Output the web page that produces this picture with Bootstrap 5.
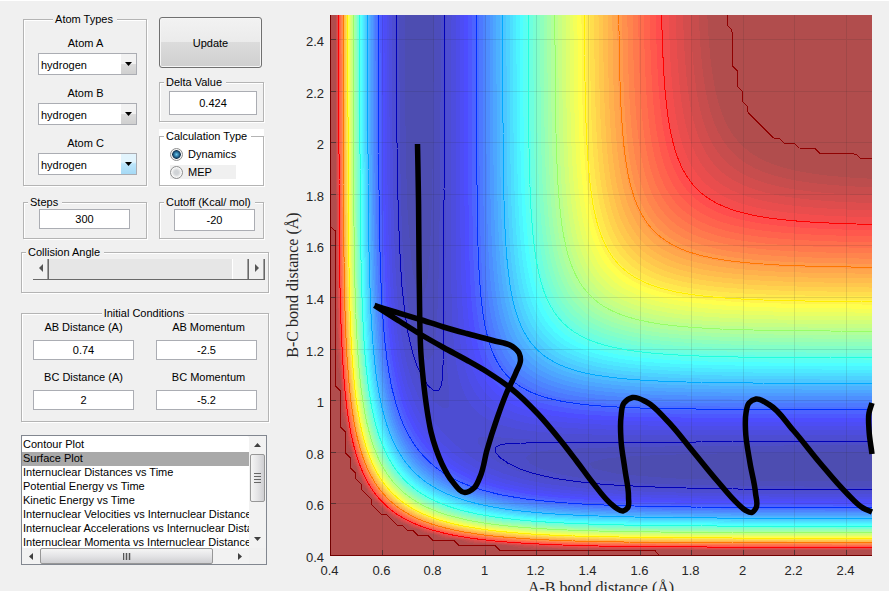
<!DOCTYPE html>
<html lang="en">
<head>
<meta charset="utf-8">
<meta name="viewport" content="width=device-width, initial-scale=1">
<title>Triatomic reaction dynamics</title>
<link href="https://cdn.jsdelivr.net/npm/bootstrap@5.3.0/dist/css/bootstrap.min.css" rel="stylesheet">
<style>
  body { background: #f0f0f0; color: #000; border-top: 1px solid #fff;
         font: 11px/14px "Liberation Sans", Arial, sans-serif; }
  .controls { flex: 0 0 269px; padding: 11px 0 0 21px; }
  .col-a { flex: 0 0 123px; margin-left: 2px; }
  .col-b { flex: 0 0 105px; margin-left: 12px; padding-top: 5px; }
  .frame { border: 1px solid #b4b4b4; box-shadow: 1px 1px 0 #fff, inset 1px 1px 0 #fff; padding: 0; margin: 0; min-width: 0; }
  .frame > legend { float: none; width: auto; margin: 0 0 0 4px; padding: 0 4px 0 2px; background: #f0f0f0;
                    font-size: 11px; line-height: 14px; }
  .frame > legend.centered { margin: 0 auto; }
  .field { font-size: 11px; line-height: 14px; text-align: center; color: #000; background: #fff;
           border: 1px solid #abadb3; border-radius: 0; padding: 0; display: block; width: 100%; height: 20px; }
  .field-md { height: 22px; }
  .field-lg { height: 24px; }
  .steps { padding: 0 16px 9px 15px; }
  .delta { padding: 2px 6px 6px 9px; }
  .cutoff { padding: 0 8px 7px 14px; }
  .atoms { padding: 10px 9px 0 14px; height: 159px; }
  .atoms label { display: block; text-align: center; margin-bottom: 3px; padding-right: 4px; }
  .pick { appearance: none; display: block; width: 99px; height: 22px; margin-bottom: 11px; padding: 1px 18px 0 2px;
          font-size: 11px; color: #000; border: 1px solid #abadb3; border-radius: 0;
          background:
            url("data:image/svg+xml,%3Csvg xmlns='http://www.w3.org/2000/svg' width='7' height='4'%3E%3Cpath d='M0 0h7L3.500 4z'/%3E%3C/svg%3E") right 4px center / 7px 4px no-repeat,
            linear-gradient(#f2f2f2 50%, #dcdcdc 50%, #cfcfcf) right center / 15px 100% no-repeat, #fff; }
  .pick-hot { background:
            url("data:image/svg+xml,%3Csvg xmlns='http://www.w3.org/2000/svg' width='7' height='4'%3E%3Cpath d='M0 0h7L3.500 4z'/%3E%3C/svg%3E") right 4px center / 7px 4px no-repeat,
            linear-gradient(#e2f4fd 40%, #bce5fb 50%, #a5d9f5) right center / 15px 100% no-repeat, #fff; }
  .update { height: 51px; width: 103px; font-size: 11px; color: #000; border: 1px solid #707070; border-radius: 3px;
            background: linear-gradient(#f2f2f2, #ebebeb 48%, #dcdcdc 49%, #cfcfcf); box-shadow: inset 0 0 0 1px #f5f5f5; }
  .gap-s { margin-top: 7px; }
  .gap-m { margin-top: 9px; }
  .calc { background: #fff; }
  .calc legend { background: #fff; }
  .calc .choices { padding: 2px 0 4px 10px; }
  .choice { height: 18px; }
  .choice label { padding-left: 5px; }
  .choice input { appearance: none; width: 13px; height: 13px; margin: 0; border: 1px solid #8e8f8f; border-radius: 50%;
                  background: radial-gradient(circle, #d0d3d6 2px, #f4f4f4 5px); box-shadow: inset 0 0 0 1px #f8f8f8; }
  .choice input:checked { background: radial-gradient(circle at 50% 50%, #68c8ee 0, #1c5a85 3px, #12304a 4px, #e6e6e6 5px); }
  .choice-dim > span { background: #f0f0f0; height: 14px; width: 66px; display: flex; align-items: center; }
  .collision { margin-top: 6px; }
  .slider { height: 21px; margin: 0 3px 12px 11px; border-bottom: 1px solid #696969; }
  .arrow { width: 16px; padding: 0 0 3px; border: 0; border-right: 1px solid #696969; background: #f0f0f0;
           box-shadow: inset -1px 0 0 #a0a0a0; display: flex; align-items: center; justify-content: center; }
  .slider input { appearance: none; flex: 1 1 0; min-width: 0; margin: 0; height: 20px; background: #e6e6e6; }
  .slider input::-webkit-slider-thumb { appearance: none; width: 17px; height: 20px; background: #f0f0f0;
           border-left: 1px solid #fff; border-right: 1px solid #696969; box-shadow: inset -1px 0 0 #a0a0a0; }
  .conditions { margin-top: 13px; }
  .initial { padding: 0 11px 11px 11px; display: grid; grid-template-columns: 1fr 1fr; column-gap: 22px; row-gap: 10px; }
  .initial label { display: block; text-align: center; margin-bottom: 6px; }
  .initial .second label { padding-left: 4px; }
  .plots { margin-top: 13px; width: 246px; height: 130px; border: 1px solid #828790; background: #f0f0f0;
           display: grid; grid-template: 112px 16px / 1fr 17px; }
  .plots select { appearance: none; border: 0; padding: 2px 0 0; margin: 0; width: 100%; height: 112px; overflow: hidden;
                  background: #fff; color: #000; font-size: 11px; outline: 0; }
  .plots option { padding: 0 0 0 1px; height: 14px; min-height: 14px; line-height: 15px; color: #000; }
  .plots option:checked { background: #a9a9a9 linear-gradient(#a9a9a9, #a9a9a9); color: #000; }
  .bar-btn { border: 0; padding: 0; background: none; display: flex; align-items: center; justify-content: center; flex: 0 0 18px; }
  .vbar, .hbar { background: #f2f2f2; display: flex; }
  .vbar { flex-direction: column; }
  .grip { border: 1px solid #979797; border-radius: 2px; display: flex; align-items: center; justify-content: center; }
  .vbar .grip { flex: 0 0 48px; margin: 0 1px; background: linear-gradient(90deg, #f5f5f5, #e4e4e6 50%, #cfcfd2); }
  .hbar .grip { flex: 0 0 173px; background: linear-gradient(#f5f5f5, #e4e4e6 50%, #cfcfd2); }
  .plot-area { flex: 1 1 0; min-width: 0; margin-top: -1px; }
  .plot-area svg { display: block; width: 100%; height: auto; }
  .tick { font: 13px "Liberation Sans", Arial, sans-serif; fill: #262626; }
  .axis-title { font: 16px "Liberation Serif", serif; fill: #262626; text-anchor: middle; }
</style>
<script src="https://cdn.jsdelivr.net/npm/bootstrap@5.3.0/dist/js/bootstrap.bundle.min.js"></script>
</head>
<body>
<main class="d-flex align-items-start">
  <form class="controls">
    <div class="d-flex">
      <div class="col-a">
        <fieldset class="frame">
          <legend class="centered">Atom Types</legend>
          <div class="atoms">
            <label for="atomA">Atom A</label>
            <select class="pick" id="atomA"><option>hydrogen</option></select>
            <label for="atomB">Atom B</label>
            <select class="pick" id="atomB"><option>hydrogen</option></select>
            <label for="atomC">Atom C</label>
            <select class="pick pick-hot" id="atomC"><option>hydrogen</option></select>
          </div>
        </fieldset>
        <fieldset class="frame gap-m">
          <legend>Steps</legend>
          <div class="steps"><input class="field" aria-label="Steps" value="300"></div>
        </fieldset>
      </div>
      <div class="col-b">
        <button class="update" type="button">Update</button>
        <fieldset class="frame gap-s">
          <legend>Delta Value</legend>
          <div class="delta"><input class="field field-lg" aria-label="Delta Value" value="0.424"></div>
        </fieldset>
        <div class="calc gap-s">
          <fieldset class="frame">
            <legend>Calculation Type</legend>
            <div class="choices">
              <div class="choice d-flex align-items-center"><input type="radio" name="calc" id="dyn" checked><label for="dyn">Dynamics</label></div>
              <div class="choice choice-dim d-flex align-items-center"><span><input type="radio" name="calc" id="mep"><label for="mep">MEP</label></span></div>
            </div>
          </fieldset>
        </div>
        <fieldset class="frame gap-m">
          <legend>Cutoff (Kcal/ mol)</legend>
          <div class="cutoff"><input class="field field-md" aria-label="Cutoff" value="-20"></div>
        </fieldset>
      </div>
    </div>
    <fieldset class="frame collision">
      <legend>Collision Angle</legend>
      <div class="slider d-flex">
        <button class="arrow" type="button" aria-label="Decrease angle"><svg width="4" height="8"><path d="M4 0v8L0 4z" fill="#555"/></svg></button>
        <input type="range" aria-label="Collision Angle" min="0" max="180" value="180">
        <button class="arrow" type="button" aria-label="Increase angle"><svg width="4" height="8"><path d="M0 0v8l4-4z" fill="#555"/></svg></button>
      </div>
    </fieldset>
    <fieldset class="frame conditions">
      <legend class="centered">Initial Conditions</legend>
      <div class="initial">
        <div><label for="abd">AB Distance (A)</label><input class="field" id="abd" value="0.74"></div>
        <div class="second"><label for="abm">AB Momentum</label><input class="field" id="abm" value="-2.5"></div>
        <div><label for="bcd">BC Distance (A)</label><input class="field" id="bcd" value="2"></div>
        <div class="second"><label for="bcm">BC Momentum</label><input class="field" id="bcm" value="-5.2"></div>
      </div>
    </fieldset>
    <div class="plots">
      <select size="8" aria-label="Plot type">
        <option>Contour Plot</option>
        <option selected>Surface Plot</option>
        <option>Internuclear Distances vs Time</option>
        <option>Potential Energy vs Time</option>
        <option>Kinetic Energy vs Time</option>
        <option>Internuclear Velocities vs Internuclear Distance</option>
        <option>Internuclear Accelerations vs Internuclear Distance</option>
        <option>Internuclear Momenta vs Internuclear Distance</option>
      </select>
      <div class="vbar">
        <button class="bar-btn" type="button" aria-label="Scroll up"><svg width="7" height="4"><path d="M0 4h7L3.500 0z" fill="#404040"/></svg></button>
        <span class="grip"><svg width="7" height="10"><path d="M0 .5h7M0 3.500h7M0 6.500h7M0 9.500h7" stroke="#666"/></svg></span>
        <button class="bar-btn mt-auto" type="button" aria-label="Scroll down"><svg width="7" height="4"><path d="M0 0h7L3.500 4z" fill="#404040"/></svg></button>
      </div>
      <div class="hbar">
        <button class="bar-btn" type="button" aria-label="Scroll left"><svg width="4" height="7"><path d="M4 0v7L0 3.500z" fill="#404040"/></svg></button>
        <span class="grip"><svg width="8" height="7"><path d="M.5 0v7M3.500 0v7M6.500 0v7" stroke="#555" stroke-width="1.500"/></svg></span>
        <button class="bar-btn ms-auto" type="button" aria-label="Scroll right"><svg width="4" height="7"><path d="M0 0v7l4-3.500z" fill="#404040"/></svg></button>
      </div>
    </div>
  </form>

  <div class="plot-area">
    <svg id="plot" viewBox="269 0 620 591" role="img" aria-label="Potential energy surface with trajectory">
      <clipPath id="axes"><path d="M330 15H872V556H330z"/></clipPath>
      <g id="field" shape-rendering="crispEdges"></g>
      <g id="gridlines" stroke="#262626" stroke-opacity=".12" shape-rendering="crispEdges"></g>
      <g id="contours" fill="none" shape-rendering="crispEdges" clip-path="url(#axes)"></g>
      <g id="ticks"></g>
      <path id="path" fill="none" stroke="#000" stroke-width="5.500" stroke-linejoin="round"/>
      <text class="axis-title" x="601" y="593">A-B bond distance (Å)</text>
      <text class="axis-title" transform="translate(298 285) rotate(-90)">B-C bond distance (Å)</text>
    </svg>
  </div>
</main>
<script>
// London-Eyring-Polanyi-Sato surface for collinear H + H2, energies in kcal/mol.
const D = 109.4, BETA = 1.986, RE = 0.742, K = 0.185, CUTOFF = -20;
function pair(r) {
  const e = Math.exp(-BETA * (r - RE));
  const s = (1 + K) * D * (e * e - 2 * e), t = (1 - K) * D / 2 * (e * e + 2 * e);
  return [(s + t) / 2, (s - t) / 2];
}
function energy(ab, bc) {
  const [q1, j1] = pair(ab), [q2, j2] = pair(bc), [q3, j3] = pair(ab + bc);
  const root = Math.sqrt(((j1 - j2) ** 2 + (j2 - j3) ** 2 + (j3 - j1) ** 2) / 2);
  return Math.min(CUTOFF, (q1 + q2 + q3 - root) / (1 + K));
}
const R0 = 0.4, STEP = 0.02, N = 106, LEFT = 330, BOTTOM = 556, TOP = 15, RIGHT = 872, S = 258;
const px = r => LEFT + (r - R0) * S, py = r => BOTTOM - (r - R0) * S;
const grid = [];
let vmin = 0;
for (let j = 0; j < N; j++) {
  grid.push([]);
  for (let i = 0; i < N; i++) { const v = energy(R0 + i * STEP, R0 + j * STEP); grid[j].push(v); vmin = Math.min(vmin, v); }
}
function jet(t, alpha) {
  t = Math.min(t, .984);
  const c = k => { const v = Math.max(0, Math.min(1, 1.5 - Math.abs(4 * t - k)));
                   return Math.round(255 * (v * alpha + 1 - alpha)); };
  return `rgb(${c(3)},${c(2)},${c(1)})`;
}
const el = (parent, name, attrs, text) => {
  const n = document.createElementNS('http://www.w3.org/2000/svg', name);
  for (const k in attrs) n.setAttribute(k, attrs[k]);
  if (text) n.textContent = text;
  document.getElementById(parent).appendChild(n);
};
// Colour bands, one path per colour made of horizontal runs.
const bands = Array.from({ length: 64 }, () => []);
function bandAt(x, y) {
  const fx = (x - LEFT) / S / STEP, fy = (BOTTOM - y) / S / STEP, i = Math.floor(fx), j = Math.floor(fy), a = fx - i, b = fy - j;
  const v = (grid[j][i] * (1 - a) + grid[j][i + 1] * a) * (1 - b) + (grid[j + 1][i] * (1 - a) + grid[j + 1][i + 1] * a) * b;
  return Math.min(63, Math.floor((v - vmin) / (CUTOFF - vmin) * 64));
}
for (let y = TOP; y < BOTTOM; y++) {
  let start = LEFT, cur = bandAt(LEFT + .5, y + .5);
  for (let x = LEFT + 1; x <= RIGHT; x++) {
    const c = x < RIGHT ? bandAt(x + .5, y + .5) : -1;
    if (c !== cur) { bands[cur].push(`M${start} ${y}H${x}v1H${start}z`); start = x; cur = c; }
  }
}
bands.forEach((b, k) => el('field', 'path', { d: b.join(''), fill: jet((k + 1) / 64, .7) }));
// Contour lines by marching squares.
for (let n = 0; n < 9; n++) {
  const level = n === 8 ? CUTOFF - .001 : -105.6 + n * 10.62;
  let d = '';
  for (let j = 0; j < N - 1; j++) for (let i = 0; i < N - 1; i++) {
    const p = [[i, j], [i + 1, j], [i + 1, j + 1], [i, j + 1]], hits = [];
    for (let k = 0; k < 4; k++) {
      const [ax, ay] = p[k], [bx, by] = p[(k + 1) % 4], va = grid[ay][ax] - level, vb = grid[by][bx] - level;
      if (va < 0 !== vb < 0) {
        const t = va / (va - vb);
        hits.push([px(R0 + (ax + (bx - ax) * t) * STEP), py(R0 + (ay + (by - ay) * t) * STEP)].map(q => q.toFixed(1)).join(' '));
      }
    }
    for (let k = 0; k + 1 < hits.length; k += 2) d += `M${hits[k]}L${hits[k + 1]}`;
  }
  el('contours', 'path', { d, stroke: jet((level - vmin) / (CUTOFF - vmin) * .985 + .015, 1) });
}
// Grid, ticks and tick labels.
el('ticks', 'path', { d: `M330.500 15V555.500H872`, stroke: '#700000', fill: 'none', 'shape-rendering': 'crispEdges' });
for (let n = 0; n <= 10; n++) {
  const r = .4 + n * .2, x = Math.round(px(r)) + .5, y = Math.round(py(r)) - .5, label = String(+r.toFixed(1));
  if (n) {
    el('gridlines', 'path', { d: `M${x} 15V556M330 ${y}H872` });
    el('ticks', 'path', { d: `M${x} 555v-5M331 ${y}h5`, stroke: '#262626', 'stroke-opacity': .6, 'shape-rendering': 'crispEdges' });
  }
  el('ticks', 'text', { class: 'tick', x: x - 1, y: 575, 'text-anchor': 'middle' }, label);
  el('ticks', 'text', { class: 'tick', x: 324, y: y + 6, 'text-anchor': 'end' }, label);
}
// Trajectory, smoothed through its sample points.
const runs = [
  [[417.5,144],[418,170],[418.5,200],[419,260],[419.5,300],[420,330],[421,355],[422.5,372],[425,395],[428,416],[431,432],[436,449],[442,464],[452,481],[465,492.5],[474,488],[480,477],[487,450],[497,418.5],[506.5,393],[516,372.5],[520.5,360],[519,353],[512.5,346.5],[493,340.5],[466.5,333.5],[443.5,327],[420,319.5],[397,312.5],[374.5,305.5]],
  [[374.5,305.5],[400,321.5],[420,334],[443.5,347.5],[466.5,360],[488,372.5],[511,388.5],[538,414],[561,441],[576.5,461],[593,483],[610,503],[616,508],[623,511],[627.5,508],[628.5,497],[625,470],[621,440],[621,417],[624,403],[632.5,397.5],[646.5,402],[666.5,420],[693,451.5],[716.5,480],[738,504],[745,510],[752,512.500],[756,508],[755.5,493],[750,463],[745.5,430],[746,413],[749,403],[756,399],[769,404.5],[793,430],[820,463],[846.5,493],[863,508],[872,512]],
  [[872,403],[869,413],[869,430],[872,454]]
];
document.getElementById('path').setAttribute('d', runs.map(p => {
  // Tangent of the parabola through each point and its neighbours.
  const h = i => Math.hypot(p[i + 1][0] - p[i][0], p[i + 1][1] - p[i][1]);
  const slope = (i, k) => (p[i + 1][k] - p[i][k]) / h(i);
  const tangent = (i, k) => i === 0 ? slope(0, k) : i === p.length - 1 ? slope(i - 1, k)
    : (slope(i - 1, k) * h(i) + slope(i, k) * h(i - 1)) / (h(i) + h(i - 1));
  let d = 'M' + p[0];
  for (let i = 0; i < p.length - 1; i++) {
    const t = h(i) / 3;
    d += `C${p[i][0] + tangent(i, 0) * t} ${p[i][1] + tangent(i, 1) * t} ${p[i + 1][0] - tangent(i + 1, 0) * t} ${p[i + 1][1] - tangent(i + 1, 1) * t} ${p[i + 1]}`;
  }
  return d;
}).join(''));
</script>
</body>
</html>
